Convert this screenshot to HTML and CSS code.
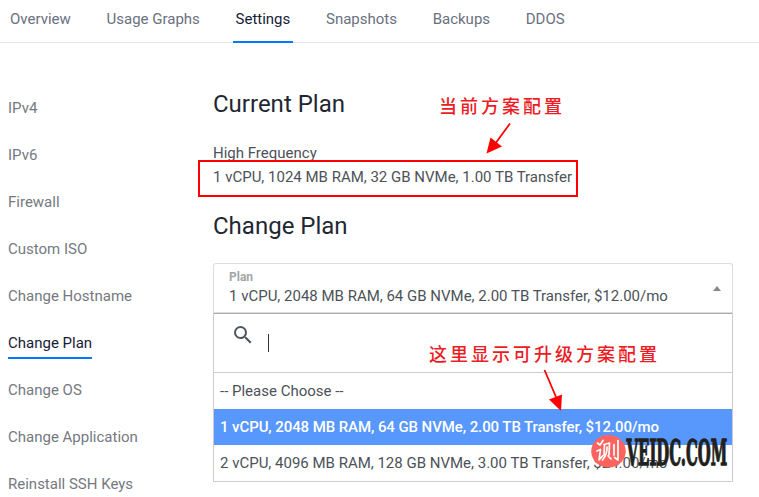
FILE: index.html
```html
<!DOCTYPE html>
<html lang="en">
<head>
<meta charset="utf-8">
<title>Change Plan</title>
<link rel="stylesheet" href="styles.css">
</head>
<body>
<nav class="tabs">
  <a class="tab">Overview</a><a class="tab">Usage Graphs</a><a class="tab active">Settings</a><a class="tab">Snapshots</a><a class="tab">Backups</a><a class="tab">DDOS</a>
</nav>
<div class="page">
  <aside class="side">
    <a>IPv4</a><a>IPv6</a><a>Firewall</a><a>Custom ISO</a><a>Change Hostname</a><a class="current">Change Plan</a><a>Change OS</a><a>Change Application</a><a>Reinstall SSH Keys</a>
  </aside>
  <main class="content">
    <h2 class="title">Current Plan</h2>
    <div class="info">
      <div>High Frequency</div>
      <div class="spec">1 vCPU, 1024 MB RAM, 32 GB NVMe, 1.00 TB Transfer</div>
    </div>
    <h2 class="title second">Change Plan</h2>
    <div class="select">
      <div class="label">Plan</div>
      <div class="value">1 vCPU, 2048 MB RAM, 64 GB NVMe, 2.00 TB Transfer, $12.00/mo</div>
      <span class="caret"></span>
    </div>
    <div class="dropdown">
      <div class="search">
        <svg class="glass" width="24" height="24" viewBox="0 0 24 24"><path d="M15.500 14h-.79l-.28-.27A6.470 6.470 0 0 0 16 9.500 6.500 6.500 0 1 0 9.500 16c1.610 0 3.090-.59 4.230-1.570l.27.28v.79l5 4.990L20.490 19zm-6 0C7.010 14 5 11.990 5 9.500S7.010 5 9.500 5 14 7.010 14 9.500 11.990 14 9.500 14z"/></svg>
        <span class="cursor"></span>
      </div>
      <div class="option">-- Please Choose --</div>
      <div class="option selected">1 vCPU, 2048 MB RAM, 64 GB NVMe, 2.00 TB Transfer, $12.00/mo</div>
      <div class="option">2 vCPU, 4096 MB RAM, 128 GB NVMe, 3.00 TB Transfer, $24.00/mo</div>
    </div>
  </main>
</div>
<div class="mark"></div>
<div class="note note-current">当前方案配置</div>
<div class="note note-upgrade">这里显示可升级方案配置</div>
<svg class="overlay" width="759" height="497" viewBox="0 0 759 497">
  <g stroke="#f00" stroke-width="1.8" fill="#f00">
    <path d="M510 123.500 495 144M544.500 370 556 397"/>
    <path stroke="none" d="M486.500 153.500 490.500 137.500 502 146.500ZM561 411 549 399.500 562 394.500Z"/>
  </g>
  <ellipse cx="608.500" cy="451.300" rx="17.300" ry="16.300" fill="#ff635f"/>
  <g fill="none" stroke="#fff" stroke-width="1.700" stroke-linecap="round" stroke-linejoin="round">
    <path d="M597.500 443 600 445 603 440.500M597 451 600.500 449.500 599 460 602.500 456M604 444.500 609.500 443 609 455M604.500 445 604 455M607 447C607.500 454 604 458 602.500 460M608 456 611 459M614 444.500V455M618 440.500V460L614.500 457.500"/>
  </g>
  <text class="brand" transform="translate(626.500 465) scale(.46 1)">VEIDC.COM</text>
</svg>
</body>
</html>
```
FILE: styles.css
```css
* { box-sizing: border-box; }
body {
  margin: 0;
  height: 497px;
  overflow: hidden;
  position: relative;
  background: #fff;
  color: #4d5259;
  font: 15px/24px Roboto, "Liberation Sans", sans-serif;
}
.tabs {
  display: flex;
  gap: 30.700px;
  height: 43px;
  padding-left: 7.500px;
  border-bottom: 1px solid #e3e4e6;
}
.tab {
  height: 43px;
  padding: 7px 2.500px 0;
  color: #6a7080;
  white-space: nowrap;
}
.tab.active { color: #171c38; border-bottom: 2px solid #007bfc; }
.page { display: flex; }
.side {
  width: 213px;
  padding: 53px 0 0 8px;
  display: flex;
  flex-direction: column;
  align-items: flex-start;
  gap: 15px;
}
.side a { height: 32px; color: #75797f; white-space: nowrap; }
.side a.current { color: #171c38; border-bottom: 2px solid #007bfc; height: 28px; margin-bottom: 4px; }
.content { width: 520px; padding-top: 45px; }
.title { margin: 0; font-size: 24px; line-height: 32px; font-weight: 400; color: #1f2733; }
.info { margin-top: 21px; }
.second { margin-top: 21px; }
.select {
  position: relative;
  height: 51px;
  margin-top: 21px;
  padding: 5px 15px 0;
  border: 1px solid #dcdddf;
  border-bottom: 1px solid #aaa;
  box-shadow: inset 0 -1px #dcdddf;
  border-radius: 3px 3px 0 0;
}
.label { font-size: 12px; line-height: 16px; font-weight: 700; color: #a3a5a9; }
.value { line-height: 22px; white-space: nowrap; }
.caret {
  position: absolute;
  right: 11px;
  top: 22px;
  border: 4px solid transparent;
  border-top: 0;
  border-bottom: 5px solid #888;
}
.dropdown { border: 1px solid #ccc; border-top: 0; }
.search { height: 59px; border-bottom: 1px solid #ccc; display: flex; padding: 9px 0 0 17px; }
.glass { fill: #4d5561; }
.cursor { width: 1px; height: 18px; margin: 11px 0 0 13px; background: #333; }
.option { height: 36px; padding-left: 6px; line-height: 36px; white-space: nowrap; }
.option.selected { background: #5897fb; color: #fff; font-weight: 500; letter-spacing: -.085px; }
.mark { position: absolute; left: 198px; top: 160px; width: 380px; height: 37px; border: 2px solid #f00; }
.note {
  position: absolute;
  color: #ed1c24;
  font: 500 18px/24px "Noto Sans CJK SC", sans-serif;
  letter-spacing: 3px;
  white-space: nowrap;
}
.note-current { left: 439px; top: 93px; }
.note-upgrade { left: 429px; top: 341px; }
.overlay { position: absolute; left: 0; top: 0; }
.brand { font: 700 36px "DejaVu Serif Condensed", "DejaVu Serif", serif; font-stretch: condensed; fill: #211f20; stroke: #211f20; stroke-width: 1.300px; }
```
